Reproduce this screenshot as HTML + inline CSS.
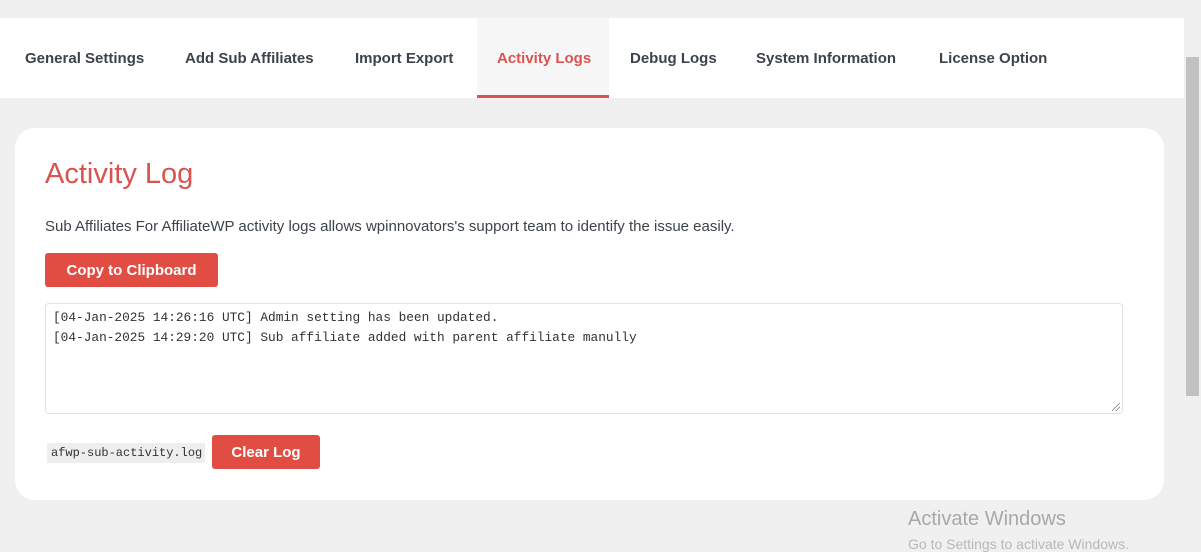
<!DOCTYPE html>
<html><head><style>
*{margin:0;padding:0;box-sizing:border-box}
body{width:1201px;height:541px;background:#f0f0f1;font-family:"Liberation Sans",sans-serif;position:relative;overflow:hidden;color:#3c434a}
.nav{position:absolute;left:0;top:18px;width:1184px;height:80px;background:#fff}
.tab{position:absolute;top:0;height:80px;line-height:81px;font-size:15px;font-weight:bold;color:#3c434a;white-space:nowrap}
.act{background:#f7f7f7;color:#d9534f;border-bottom:3px solid #d9534f;padding:0 20px;line-height:81px}
.sb{position:absolute;left:1186px;top:57px;width:13px;height:339px;background:#c1c1c1}
.card{position:absolute;left:15px;top:128px;width:1149px;height:372px;background:#fff;border-radius:20px}
h1{position:absolute;left:45px;top:158px;font-size:29px;font-weight:normal;color:#d9534f}
p{position:absolute;left:45px;top:218px;font-size:15px;color:#3c434a;white-space:nowrap}
.btn{position:absolute;background:#e14d43;color:#fff;font-weight:bold;font-size:15px;border-radius:3px;text-align:center}
.ta{position:absolute;left:45px;top:303px;width:1078px;height:111px;border:1px solid #e2e2e2;border-radius:4px;font-family:"Liberation Mono",monospace;font-size:12.8px;line-height:20px;padding:4px 7px;color:#2c3338}
.grip{position:absolute;left:1112px;top:403px;width:8px;height:8px;background:linear-gradient(135deg,transparent 45%,#777 45%,#777 52%,transparent 52%,transparent 70%,#777 70%,#777 77%,transparent 77%)}
code{position:absolute;left:47px;top:443px;width:158px;height:20px;background:#eeeeee;font-family:"Liberation Mono",monospace;font-size:12px;line-height:21px;padding-left:4px;color:#2c3338;white-space:nowrap}
.aw{position:absolute;left:908px;top:508px;font-size:20px;color:#a8a8a8;white-space:nowrap}
.aw2{position:absolute;left:908px;top:536px;font-size:14px;color:#b8b8b8;white-space:nowrap}
</style></head><body>
<div class="nav">
<div class="tab" style="left:25px">General Settings</div>
<div class="tab" style="left:185px">Add Sub Affiliates</div>
<div class="tab" style="left:355px">Import Export</div>
<div class="tab act" style="left:477px;width:132px">Activity Logs</div>
<div class="tab" style="left:630px">Debug Logs</div>
<div class="tab" style="left:756px">System Information</div>
<div class="tab" style="left:939px">License Option</div>
</div>
<div class="sb"></div>
<div class="card"></div>
<h1>Activity Log</h1>
<p>Sub Affiliates For AffiliateWP activity logs allows wpinnovators's support team to identify the issue easily.</p>
<div class="btn" style="left:45px;top:253px;width:173px;height:34px;line-height:35px">Copy to Clipboard</div>
<div class="ta">[04-Jan-2025 14:26:16 UTC] Admin setting has been updated.<br>[04-Jan-2025 14:29:20 UTC] Sub affiliate added with parent affiliate manully</div>
<div class="grip"></div>
<code>afwp-sub-activity.log</code>
<div class="btn" style="left:212px;top:435px;width:108px;height:34px;line-height:35px">Clear Log</div>
<div class="aw">Activate Windows</div>
<div class="aw2">Go to Settings to activate Windows.</div>
</body></html>
